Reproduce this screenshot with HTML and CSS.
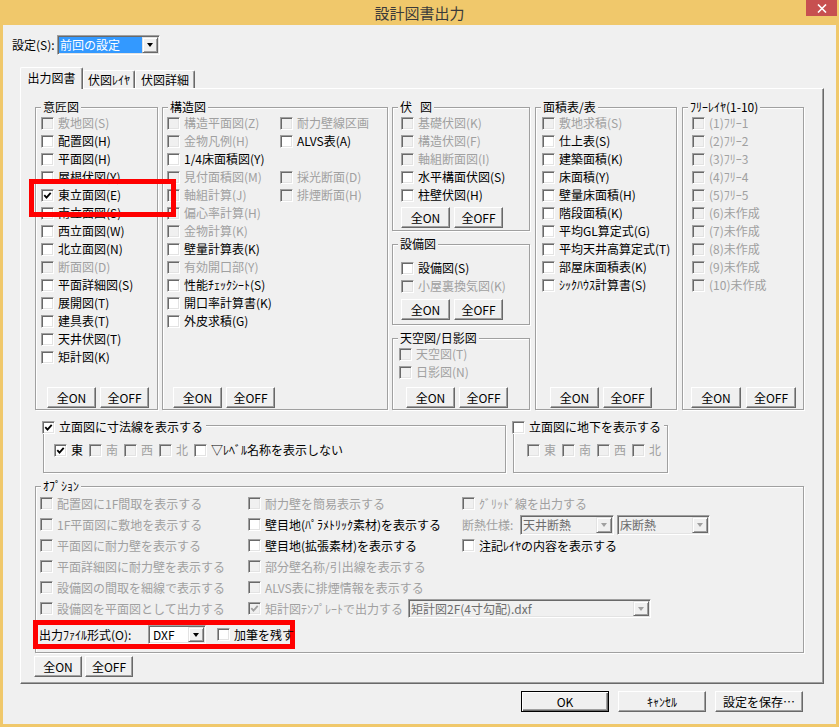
FILE: index.html
```html
<!DOCTYPE html>
<html lang="ja">
<head>
<meta charset="utf-8">
<title>設計図書出力</title>
<link rel="stylesheet" href="styles.css">
</head>
<body>
<div class="window">
  <div class="titlebar">
    <span class="tb-spacer"></span>
    <span class="title">設計図書出力</span>
    <span class="close"><svg width="10" height="9" viewBox="0 0 10 9"><path d="M1 .5l8 8M9 .5l-8 8" stroke="#fff" stroke-width="1.6" fill="none"/></svg></span>
  </div>
  <div class="client">
    <div class="setting-row">
      <span class="setting-label">設定(S):</span>
      <span class="combo combo-setting"><span class="ctext sel">前回の設定</span><span class="drop"><i class="tri"></i></span></span>
    </div>
    <div class="tabs">
      <span class="tab active">出力図書</span>
      <span class="tab tab-layer">伏図ﾚｲﾔ</span>
      <span class="tab tab-detail">伏図詳細</span>
    </div>
    <div class="panel">
      <div class="top-row">
        <div class="group g-ishou">
          <div class="gtitle">意匠図</div>
          <div class="list l-ishou">
            <div class="cb dis"><span class="box"></span>敷地図(S)</div>
            <div class="cb"><span class="box"></span>配置図(H)</div>
            <div class="cb"><span class="box"></span>平面図(H)</div>
            <div class="cb"><span class="box"></span>屋根伏図(Y)</div>
            <div class="cb mark"><span class="box"><svg class="chk" viewBox="0 0 9 9"><path d="M1.3 4.2l2.2 2.4 4.2-4.8"/></svg></span>東立面図(E)</div>
            <div class="cb"><span class="box"></span>南立面図(S)</div>
            <div class="cb"><span class="box"></span>西立面図(W)</div>
            <div class="cb"><span class="box"></span>北立面図(N)</div>
            <div class="cb dis"><span class="box"></span>断面図(D)</div>
            <div class="cb"><span class="box"></span>平面詳細図(S)</div>
            <div class="cb"><span class="box"></span>展開図(T)</div>
            <div class="cb"><span class="box"></span>建具表(T)</div>
            <div class="cb"><span class="box"></span>天井伏図(T)</div>
            <div class="cb"><span class="box"></span>矩計図(K)</div>
          </div>
          <div class="btns b-ishou"><span class="btn">全ON</span><span class="btn">全OFF</span></div>
        </div>

        <div class="group g-kouzou">
          <div class="gtitle">構造図</div>
          <div class="kcols">
            <div class="kcol1">
              <div class="cb dis"><span class="box"></span>構造平面図(Z)</div>
              <div class="cb dis"><span class="box"></span>金物凡例(H)</div>
              <div class="cb"><span class="box"></span>1/4床面積図(Y)</div>
              <div class="cb dis"><span class="box"></span>見付面積図(M)</div>
              <div class="cb dis"><span class="box"></span>軸組計算(J)</div>
              <div class="cb dis"><span class="box"></span>偏心率計算(H)</div>
              <div class="cb dis"><span class="box"></span>金物計算(K)</div>
              <div class="cb"><span class="box"></span>壁量計算表(K)</div>
              <div class="cb dis"><span class="box"></span>有効開口部(Y)</div>
              <div class="cb"><span class="box"></span>性能ﾁｪｯｸｼｰﾄ(S)</div>
              <div class="cb"><span class="box"></span>開口率計算書(K)</div>
              <div class="cb"><span class="box"></span>外皮求積(G)</div>
            </div>
            <div class="kcol2">
              <div class="cb dis"><span class="box"></span>耐力壁線区画</div>
              <div class="cb"><span class="box"></span>ALVS表(A)</div>
              <div class="cb empty"></div>
              <div class="cb dis"><span class="box"></span>採光断面(D)</div>
              <div class="cb dis"><span class="box"></span>排煙断面(H)</div>
            </div>
          </div>
          <div class="btns b-kouzou"><span class="btn">全ON</span><span class="btn">全OFF</span></div>
        </div>

        <div class="col-fuse">
          <div class="group g-fuse">
            <div class="gtitle">伏&nbsp;&nbsp;&nbsp;図</div>
            <div class="list l-fuse">
              <div class="cb dis"><span class="box"></span>基礎伏図(K)</div>
              <div class="cb dis"><span class="box"></span>構造伏図(F)</div>
              <div class="cb dis"><span class="box"></span>軸組断面図(I)</div>
              <div class="cb"><span class="box"></span>水平構面伏図(S)</div>
              <div class="cb"><span class="box"></span>柱壁伏図(H)</div>
            </div>
            <div class="btns b-fuse"><span class="btn">全ON</span><span class="btn">全OFF</span></div>
          </div>
          <div class="group g-setsubi">
            <div class="gtitle">設備図</div>
            <div class="list l-setsubi">
              <div class="cb"><span class="box"></span>設備図(S)</div>
              <div class="cb dis"><span class="box"></span>小屋裏換気図(K)</div>
            </div>
            <div class="btns b-setsubi"><span class="btn">全ON</span><span class="btn">全OFF</span></div>
          </div>
          <div class="group g-tenku">
            <div class="gtitle">天空図/日影図</div>
            <div class="list l-tenku">
              <div class="cb dis"><span class="box"></span>天空図(T)</div>
              <div class="cb dis"><span class="box"></span>日影図(N)</div>
            </div>
            <div class="btns b-tenku"><span class="btn">全ON</span><span class="btn">全OFF</span></div>
          </div>
        </div>

        <div class="group g-menseki">
          <div class="gtitle">面積表/表</div>
          <div class="list l-menseki">
            <div class="cb dis"><span class="box"></span>敷地求積(S)</div>
            <div class="cb"><span class="box"></span>仕上表(S)</div>
            <div class="cb"><span class="box"></span>建築面積(K)</div>
            <div class="cb"><span class="box"></span>床面積(Y)</div>
            <div class="cb"><span class="box"></span>壁量床面積(H)</div>
            <div class="cb"><span class="box"></span>階段面積(K)</div>
            <div class="cb"><span class="box"></span>平均GL算定式(G)</div>
            <div class="cb"><span class="box"></span>平均天井高算定式(T)</div>
            <div class="cb"><span class="box"></span>部屋床面積表(K)</div>
            <div class="cb"><span class="box"></span>ｼｯｸﾊｳｽ計算書(S)</div>
          </div>
          <div class="btns b-menseki"><span class="btn">全ON</span><span class="btn">全OFF</span></div>
        </div>

        <div class="group g-free">
          <div class="gtitle">ﾌﾘｰﾚｲﾔ(1-10)</div>
          <div class="list l-free">
            <div class="cb dis"><span class="box"></span>(1)ﾌﾘｰ1</div>
            <div class="cb dis"><span class="box"></span>(2)ﾌﾘｰ2</div>
            <div class="cb dis"><span class="box"></span>(3)ﾌﾘｰ3</div>
            <div class="cb dis"><span class="box"></span>(4)ﾌﾘｰ4</div>
            <div class="cb dis"><span class="box"></span>(5)ﾌﾘｰ5</div>
            <div class="cb dis"><span class="box"></span>(6)未作成</div>
            <div class="cb dis"><span class="box"></span>(7)未作成</div>
            <div class="cb dis"><span class="box"></span>(8)未作成</div>
            <div class="cb dis"><span class="box"></span>(9)未作成</div>
            <div class="cb dis"><span class="box"></span>(10)未作成</div>
          </div>
          <div class="btns b-free"><span class="btn">全ON</span><span class="btn">全OFF</span></div>
        </div>
      </div>

      <div class="row2">
        <div class="group g-sunpou">
          <div class="gtitle chk-title"><span class="box"><svg class="chk" viewBox="0 0 9 9"><path d="M1.3 4.2l2.2 2.4 4.2-4.8"/></svg></span>立面図に寸法線を表示する</div>
          <div class="inline-cbs i-sunpou">
            <div class="cb"><span class="box"><svg class="chk" viewBox="0 0 9 9"><path d="M1.3 4.2l2.2 2.4 4.2-4.8"/></svg></span>東</div>
            <div class="cb dis"><span class="box"></span>南</div>
            <div class="cb dis"><span class="box"></span>西</div>
            <div class="cb dis"><span class="box"></span>北</div>
            <div class="cb"><span class="box"></span>▽ﾚﾍﾞﾙ名称を表示しない</div>
          </div>
        </div>
        <div class="group g-chika">
          <div class="gtitle chk-title"><span class="box"></span>立面図に地下を表示する</div>
          <div class="inline-cbs i-chika">
            <div class="cb dis"><span class="box"></span>東</div>
            <div class="cb dis"><span class="box"></span>南</div>
            <div class="cb dis"><span class="box"></span>西</div>
            <div class="cb dis"><span class="box"></span>北</div>
          </div>
        </div>
      </div>

      <div class="group g-option">
        <div class="gtitle">ｵﾌﾟｼｮﾝ</div>
        <div class="opts">
          <div class="cb dis"><span class="box"></span>配置図に1F間取を表示する</div>
          <div class="cb dis"><span class="box"></span>耐力壁を簡易表示する</div>
          <div class="cb dis"><span class="box"></span>ｸﾞﾘｯﾄﾞ線を出力する</div>

          <div class="cb dis"><span class="box"></span>1F平面図に敷地を表示する</div>
          <div class="cb"><span class="box"></span>壁目地(ﾊﾟﾗﾒﾄﾘｯｸ素材)を表示する</div>
          <div class="dannetsu">
            <span class="dn-label">断熱仕様:</span>
            <span class="combo dis-combo c-ceil"><span class="ctext">天井断熱</span><span class="drop"><i class="tri"></i></span></span>
            <span class="combo dis-combo c-floor"><span class="ctext">床断熱</span><span class="drop"><i class="tri"></i></span></span>
          </div>

          <div class="cb dis"><span class="box"></span>平面図に耐力壁を表示する</div>
          <div class="cb"><span class="box"></span>壁目地(拡張素材)を表示する</div>
          <div class="cb"><span class="box"></span>注記ﾚｲﾔの内容を表示する</div>

          <div class="cb dis"><span class="box"></span>平面詳細図に耐力壁を表示する</div>
          <div class="cb dis"><span class="box"></span>部分壁名称/引出線を表示する</div>
          <div></div>

          <div class="cb dis"><span class="box"></span>設備図の間取を細線で表示する</div>
          <div class="cb dis"><span class="box"></span>ALVS表に排煙情報を表示する</div>
          <div></div>

          <div class="cb dis"><span class="box"></span>設備図を平面図として出力する</div>
          <div class="cb dis span2"><span class="box"><svg class="chk" viewBox="0 0 9 9"><path d="M1.3 4.2l2.2 2.4 4.2-4.8"/></svg></span><span class="tpl-label">矩計図ﾃﾝﾌﾟﾚｰﾄで出力する</span><span class="combo dis-combo c-tpl"><span class="ctext">矩計図2F(4寸勾配).dxf</span><span class="drop"><i class="tri"></i></span></span></div>
        </div>
        <div class="outrow">
          <span class="out-label">出力ﾌｧｲﾙ形式(O):</span>
          <span class="combo c-dxf"><span class="ctext">DXF</span><span class="drop"><i class="tri"></i></span></span>
          <div class="cb"><span class="box"></span>加筆を残す</div>
        </div>
      </div>

      <div class="panel-btns"><span class="btn">全ON</span><span class="btn">全OFF</span></div>
    </div>

    <div class="footer">
      <span class="btn big default">OK</span>
      <span class="btn big">ｷｬﾝｾﾙ</span>
      <span class="btn big">設定を保存…</span>
    </div>
  </div>
</div>
</body>
</html>
```

FILE: styles.css
```css
* { box-sizing: border-box; }
html, body { margin: 0; padding: 0; }
body {
  width: 839px;
  height: 727px;
  overflow: hidden;
  font-family: "Noto Sans CJK JP", "Noto Sans", sans-serif;
  font-size: 12px;
  color: #000;
  background: #f0c86b;
}
.window {
  width: 839px;
  height: 727px;
  display: flex;
  flex-direction: column;
  background: #f0c86b;
}
.titlebar {
  height: 25px;
  flex: none;
  display: grid;
  grid-template-columns: 1fr auto 1fr;
  align-items: start;
}
.title {
  font-size: 15px;
  line-height: 25px;
  color: #3a3a3a;
  white-space: nowrap;
}
.close {
  justify-self: end;
  width: 31px;
  height: 16px;
  margin-right: 2px;
  background: #c75050;
  display: flex;
  align-items: center;
  justify-content: center;
}
.client {
  flex: 1;
  margin: 0 3px 3px;
  background: #f0f0f0;
  padding: 10px 0 0 9px;
}

/* settings row */
.setting-row { display: flex; align-items: center; height: 20px; }
.setting-label { width: 45px; line-height: 20px; white-space: nowrap; }

/* combo box */
.combo {
  display: flex;
  height: 20px;
  border: 1px solid;
  border-color: #a0a0a0 #fff #fff #a0a0a0;
  box-shadow: inset 1px 1px 0 #696969, inset -1px -1px 0 #e3e3e3;
  background: #fff;
  padding: 1px;
  flex: none;
}
.combo-setting { width: 103px; }
.ctext {
  flex: 1;
  min-width: 0;
  line-height: 16px;
  padding-left: 1px;
  white-space: nowrap;
  overflow: hidden;
}
.ctext.sel { background: #3399ff; color: #fff; }
.drop {
  width: 16px;
  height: 16px;
  flex: none;
  background: #f0f0f0;
  border: 1px solid;
  border-color: #e3e3e3 #696969 #696969 #e3e3e3;
  box-shadow: inset 1px 1px 0 #fff, inset -1px -1px 0 #a0a0a0;
  display: flex;
  align-items: center;
  justify-content: center;
}
.tri {
  width: 0;
  height: 0;
  border-left: 3.5px solid transparent;
  border-right: 3.5px solid transparent;
  border-top: 4px solid #000;
}
.dis-combo { background: #f0f0f0; color: #6d6d6d; }
.dis-combo .tri { border-top-color: #a0a0a0; }

/* tabs */
.tabs {
  display: flex;
  align-items: flex-end;
  height: 21px;
  margin: 12px 0 0 8px;
}
.tab {
  height: 18px;
  line-height: 17px;
  text-align: center;
  white-space: nowrap;
  background: #f0f0f0;
  border-top: 1px solid #fff;
  border-left: 1px solid #fff;
  border-right: 1px solid #696969;
  box-shadow: inset -1px 0 0 #a0a0a0;
  border-radius: 2px 2px 0 0;
}
.tab.active {
  width: 63px;
  height: 22px;
  line-height: 20px;
  margin-bottom: -1px;
  position: relative;
  z-index: 1;
}
.tab-layer { width: 52px; }
.tab-detail { width: 60px; }

/* panel */
.panel {
  width: 804px;
  height: 596px;
  margin-left: 8px;
  border: 1px solid;
  border-color: #fff #696969 #696969 #fff;
  box-shadow: inset -1px -1px 0 #a0a0a0;
  padding: 18px 0 0 14px;
}

/* group boxes */
.group {
  border: 1px solid #a0a0a0;
  box-shadow: inset 1px 1px 0 #fff, 1px 1px 0 #fff;
  display: flex;
  flex-direction: column;
  flex: none;
}
.gtitle {
  align-self: flex-start;
  margin: -8px 0 0 5px;
  padding: 0 2px;
  height: 14px;
  line-height: 14px;
  background: #f0f0f0;
  white-space: nowrap;
}

/* checkboxes */
.cb {
  display: flex;
  align-items: center;
  height: 18px;
  line-height: 18px;
  white-space: nowrap;
}
.box {
  width: 13px;
  height: 13px;
  flex: none;
  margin-right: 4px;
  background: #fff;
  border: 1px solid;
  border-color: #a0a0a0 #fff #fff #a0a0a0;
  box-shadow: inset 1px 1px 0 #696969, inset -1px -1px 0 #e3e3e3;
  display: flex;
  align-items: center;
  justify-content: center;
}
.chk { width: 9px; height: 9px; display: block; }
.chk path { fill: none; stroke: #000; stroke-width: 1.8; }
.dis { color: #a0a0a0; }
.dis .box { background: #f0f0f0; }
.dis .chk path { stroke: #a0a0a0; }

.mark { position: relative; }
.mark::after {
  content: "";
  position: absolute;
  left: -12px;
  top: -7px;
  width: 137px;
  height: 28px;
  border: 5px solid #ff0000;
  z-index: 1;
}

/* buttons */
.btns { margin-top: auto; display: flex; gap: 4px; }
.btn {
  width: 49px;
  height: 21px;
  flex: none;
  display: flex;
  align-items: center;
  justify-content: center;
  white-space: nowrap;
  background: #f0f0f0;
  border: 1px solid;
  border-color: #fff #696969 #696969 #fff;
  box-shadow: inset -1px -1px 0 #a0a0a0;
}
.btn.big { width: 88px; }
.btn.default {
  border-color: #000;
  box-shadow: inset 1px 1px 0 #fff, inset -1px -1px 0 #696969, inset -2px -2px 0 #a0a0a0;
}

/* top row */
.top-row { display: flex; align-items: flex-start; }
.g-ishou { width: 123px; height: 303px; margin-right: 4px; }
.g-kouzou { width: 226px; height: 303px; margin-right: 4px; }
.col-fuse { width: 138px; margin-right: 5px; display: flex; flex-direction: column; flex: none; }
.g-fuse { height: 124px; }
.g-setsubi { height: 81px; margin-top: 13px; }
.g-tenku { height: 72px; margin-top: 13px; }
.g-menseki { width: 142px; height: 303px; margin-right: 5px; }
.g-free { width: 122px; height: 303px; }

.l-ishou { padding-left: 5px; }
.b-ishou { padding-left: 11px; margin-bottom: 1px; }
.kcols { display: flex; padding-left: 4px; }
.kcol1 { width: 113px; flex: none; }
.b-kouzou { padding-left: 10px; margin-bottom: 1px; }
.l-fuse { padding-left: 8px; }
.b-fuse { padding-left: 8px; margin-bottom: 2px; }
.l-setsubi { padding-left: 8px; margin-top: 8px; }
.b-setsubi { padding-left: 8px; margin-bottom: 4px; }
.l-tenku { padding-left: 6px; }
.b-tenku { padding-left: 13px; margin-bottom: 1px; }
.l-menseki { padding-left: 6px; }
.b-menseki { padding-left: 14px; margin-bottom: 1px; }
.l-free { padding-left: 9px; }
.b-free { padding-left: 8px; margin-bottom: 1px; gap: 5px; }
.b-free .btn { width: 50px; }

/* second row */
.row2 { display: flex; margin: 15px 0 0 8px; }
.g-sunpou { width: 463px; height: 48px; }
.g-chika { width: 155px; height: 48px; margin-left: 7px; }
.chk-title {
  display: flex;
  align-items: center;
  margin: -6px 0 0 -2px;
  padding: 0 3px 0 0;
}
.inline-cbs { display: flex; gap: 6px; margin-top: 7px; }
.i-sunpou { padding-left: 10px; }
.i-chika { padding-left: 13px; }

/* options */
.g-option { width: 769px; height: 167px; margin-top: 13px; }
.opts {
  display: grid;
  grid-template-columns: 208px 214px 1fr;
  grid-auto-rows: 21px;
  padding-left: 4px;
}
.opts .cb { height: 21px; line-height: 21px; }
.span2 { grid-column: 2 / span 2; }
.tpl-label { width: 143px; flex: none; }
.c-tpl { width: 243px; height: 19px; }
.c-tpl .drop { height: 15px; }
.dannetsu { display: flex; align-items: center; }
.dn-label { width: 58px; flex: none; color: #a0a0a0; white-space: nowrap; }
.c-ceil { width: 94px; height: 20px; margin-right: 3px; }
.c-floor { width: 93px; height: 20px; }

.outrow {
  display: flex;
  align-items: center;
  width: 262px;
  height: 29px;
  margin: 1px 0 0 -3px;
  border: 5px solid #ff0000;
}
.out-label { width: 110px; padding-left: 1px; white-space: nowrap; flex: none; }
.c-dxf { width: 58px; height: 19px; margin-right: 11px; }
.c-dxf .drop { height: 15px; }
.c-dxf .ctext { line-height: 15px; padding-left: 3px; }

.panel-btns { display: flex; gap: 3px; margin: 3px 0 0 -1px; }
.panel-btns .btn { width: 48px; }

/* footer */
.footer {
  display: flex;
  justify-content: flex-end;
  gap: 9px;
  margin: 7px 33px 0 0;
}
```
